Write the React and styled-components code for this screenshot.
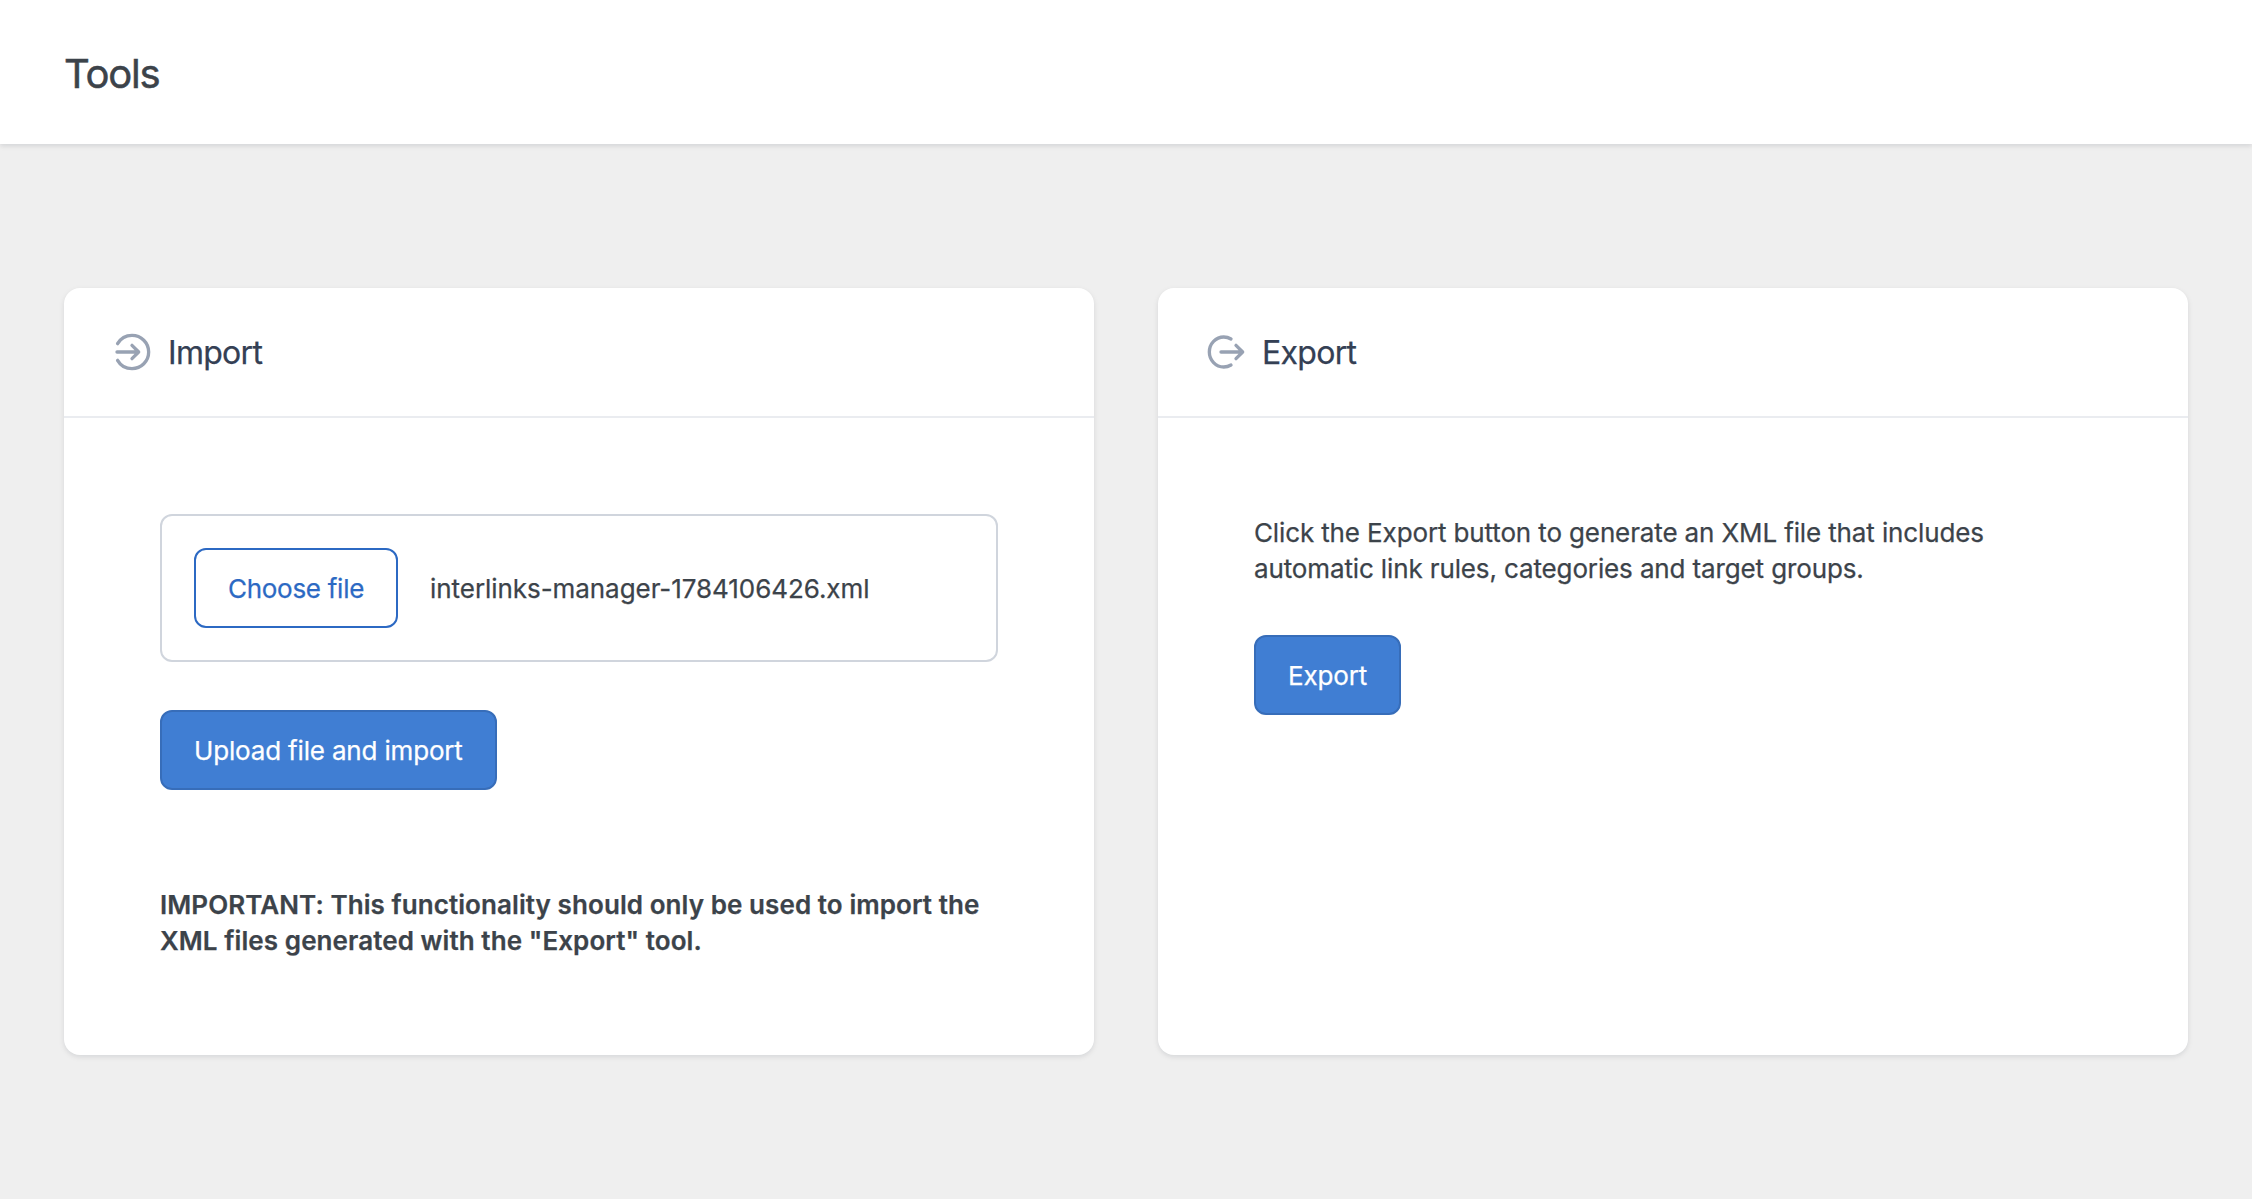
import React from 'react'

import styled, { createGlobalStyle } from 'styled-components'

const ImportIcon = () => (
  <Icon viewBox="0 0 24 24">
    <path d="M3.338 7C5.067 4.011 8.299 2 12 2c5.523 0 10 4.477 10 10s-4.477 10-10 10c-3.701 0-6.933-2.011-8.662-5" />
    <path d="M12 16l4-4m0 0l-4-4m4 4H3" />
  </Icon>
)

const ExportIcon = () => (
  <Icon viewBox="0 0 24 24">
    <path d="M15 4.204A8.4 8.4 0 0 0 10.667 3C5.88 3 2 7.03 2 12s3.88 9 8.667 9A8.4 8.4 0 0 0 15 19.796" />
    <path d="M18 8l4 4m0 0l-4 4m4-4H9" />
  </Icon>
)

const App = () => {
  return (
    <>
      <GlobalStyle />
      <Header>
        <h1>Tools</h1>
      </Header>
      <Main>
        <Card>
          <CardHeader>
            <ImportIcon />
            <h2>Import</h2>
          </CardHeader>
          <CardBody>
            <FileField>
              <Button type="button" $outline>
                Choose file
              </Button>
              <span>interlinks-manager-1784106426.xml</span>
            </FileField>
            <Button type="submit">Upload file and import</Button>
            <Notice>
              IMPORTANT: This functionality should only be used to import the
              XML files generated with the "Export" tool.
            </Notice>
          </CardBody>
        </Card>
        <Card>
          <CardHeader>
            <ExportIcon />
            <h2>Export</h2>
          </CardHeader>
          <CardBody>
            <Text>
              Click the Export button to generate an XML file that includes
              automatic link rules, categories and target groups.
            </Text>
            <Button type="submit">Export</Button>
          </CardBody>
        </Card>
      </Main>
    </>
  )
}

const GlobalStyle = createGlobalStyle`
  * {
    box-sizing: border-box;
    margin: 0;
    padding: 0;
  }
  body {
    background: #efefef;
    color: #3c434a;
    font-family: Inter, 'Liberation Sans', sans-serif;
    font-size: 26px;
    line-height: 1.4;
    letter-spacing: -0.13px;
    -webkit-text-stroke: 0.25px currentColor;
  }
`

const Header = styled.header`
  display: flex;
  align-items: center;
  height: 144px;
  padding: 3px 64px 0;
  background: #ffffff;
  box-shadow: 0 2px 6px rgba(16, 24, 40, 0.07),
    0 2px 4px rgba(16, 24, 40, 0.05);

  h1 {
    font-size: 40px;
    font-weight: 400;
    line-height: 48px;
    letter-spacing: -1.2px;
    -webkit-text-stroke-width: 0.5px;
  }
`

const Main = styled.main`
  display: grid;
  grid-template-columns: 1fr 1fr;
  gap: 64px;
  padding: 144px 64px;
`

const Card = styled.section`
  background: #ffffff;
  border-radius: 16px;
  box-shadow: 0 2px 6px rgba(16, 24, 40, 0.07),
    0 2px 4px rgba(16, 24, 40, 0.04);
`

const CardHeader = styled.div`
  display: flex;
  align-items: center;
  gap: 16px;
  height: 130px;
  padding: 0 48px;
  border-bottom: 2px solid #eaecf0;

  h2 {
    padding-top: 2px;
    color: #344054;
    font-size: 32px;
    font-weight: 400;
    line-height: 40px;
    letter-spacing: -0.7px;
  }
`

const Icon = styled.svg`
  width: 40px;
  height: 40px;
  fill: none;
  stroke: #98a2b3;
  stroke-width: 2;
  stroke-linecap: round;
  stroke-linejoin: round;
`

const CardBody = styled.div`
  padding: 96px;
`

const FileField = styled.div`
  display: flex;
  align-items: center;
  gap: 32px;
  height: 148px;
  margin-bottom: 48px;
  padding: 0 32px;
  border: 2px solid #d0d5dd;
  border-radius: 12px;

  span {
    padding-top: 2px;
    letter-spacing: -0.06px;
  }
`

const Button = styled.button`
  display: flex;
  align-items: center;
  height: 80px;
  padding: 2px 32px 0;
  border: 2px solid ${({ $outline }) => ($outline ? '#2c69c3' : '#376db9')};
  border-radius: 12px;
  background: ${({ $outline }) => ($outline ? '#ffffff' : '#407ed3')};
  color: ${({ $outline }) => ($outline ? '#2c69c3' : '#ffffff')};
  font: inherit;
  letter-spacing: ${({ $outline }) => ($outline ? '-0.28px' : '-0.17px')};
`

const Text = styled.p`
  padding-top: 1px;
  margin-bottom: 47px;
`

const Notice = styled.p`
  padding-top: 1px;
  margin: 96px 0 -1px;
  font-weight: 600;
  letter-spacing: 0.08px;
`

export default App
